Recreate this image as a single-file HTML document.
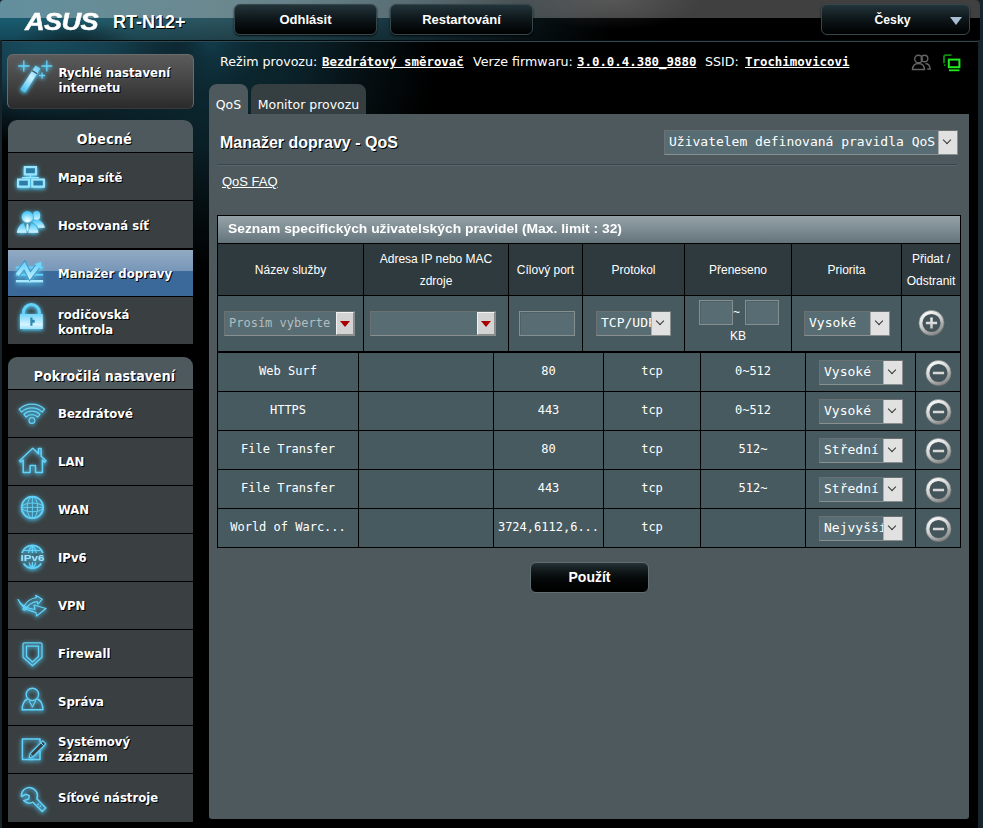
<!DOCTYPE html>
<html lang="cs">
<head>
<meta charset="utf-8">
<title>ASUS Wireless Router RT-N12+ - Manažer dopravy - QoS</title>
<style>
html,body{margin:0;padding:0;}
body{width:983px;height:828px;position:relative;overflow:hidden;background:#17242b;font-family:"Liberation Sans",sans-serif;color:#fff;}
.abs{position:absolute;}
#wrap{position:absolute;left:2px;top:0;width:976px;height:828px;background:#000;border-radius:0 5px 0 0;}
#bg1{position:absolute;left:0;top:0;width:976px;height:420px;
 background:
  radial-gradient(ellipse 180px 105px at 40px 40px, rgba(24,78,96,1) 0%, rgba(21,64,79,.95) 40%, rgba(12,36,45,.6) 75%, rgba(0,0,0,0) 100%),
  radial-gradient(ellipse 230px 230px at 205px 40px, rgba(19,66,82,1) 0%, rgba(15,50,62,1) 9%, rgba(12,40,49,.97) 22%, rgba(11,34,42,.92) 45%, rgba(7,22,27,.7) 70%, rgba(0,0,0,0) 100%);}
#hdr{position:absolute;left:-2px;top:0;width:980px;height:40px;border-radius:4px 5px 0 0;
 background:linear-gradient(90deg,rgba(255,255,255,.32) 0px,rgba(255,255,255,.30) 300px,rgba(255,255,255,.25) 600px) 0 0/100% 18px no-repeat,
  radial-gradient(ellipse 90px 30px at 612px 0px,rgba(255,255,255,.12),rgba(255,255,255,0)),
  radial-gradient(ellipse 60px 22px at 75px 42px,rgba(0,0,0,.45),rgba(0,0,0,0)),
  linear-gradient(180deg,rgba(0,0,0,0) 0px,rgba(0,0,0,0) 20px,rgba(0,0,0,.22) 40px),
  linear-gradient(90deg,#185a70 0px,#235866 120px,#2a535e 220px,#234a55 300px,#15303a 420px,#081418 520px,#000 610px);}
#hline{position:absolute;left:0;top:40px;width:976px;height:1px;background:#04090b;}
#hline2{position:absolute;left:0;top:41px;width:976px;height:1px;background:linear-gradient(90deg,#2d4a55 0,#2d4a55 400px,#39464b 976px);}
/* top buttons */
.tbtn{position:absolute;top:4px;height:31px;border:1px solid #36474c;border-radius:6px;box-sizing:border-box;
 background:linear-gradient(180deg,#22343a 0%,#0d1619 50%,#000 100%);font:bold 13px "Liberation Sans",sans-serif;color:#fff;text-align:center;line-height:30px;box-shadow:0 1px 2px rgba(0,0,0,.8);}
/* sidebar */
.sbtxt{font-family:"DejaVu Sans Condensed","DejaVu Sans",sans-serif;font-weight:bold;font-size:13px;color:#fff;text-shadow:1px 1px 0 #000;line-height:15px;}
#qis{position:absolute;left:5px;top:54px;width:187px;height:55px;border-radius:6px;box-sizing:border-box;border:1px solid #6b6b6b;border-bottom-color:#3a3a3a;
 background:linear-gradient(180deg,#5b5b5b 0%,#474747 45%,#2b2b2b 100%);}
.panel{position:absolute;left:6px;width:185px;background:#000;border-radius:9px 9px 0 0;overflow:hidden;}
.ptitle{height:32px;background:#4d595d;text-align:center;padding-left:8px;letter-spacing:.35px;box-sizing:border-box;font-family:"DejaVu Sans Condensed","DejaVu Sans",sans-serif;font-weight:bold;font-size:14px;line-height:38px;text-shadow:1px 1px 0 #000;margin-bottom:1px;}
.mi{height:47px;background:#3a4042;margin-bottom:1px;position:relative;}
.mi.on{border-top:1px solid #000;height:46px;background:linear-gradient(180deg,#91aac3 0px,#7897b8 20.500px,#3b6a9a 21.500px,#3a6999 46px);}
.mi.on svg{top:0;}
.mi.on span{top:16px;}
.mi span{position:absolute;left:50px;top:17px;white-space:nowrap;}
.mi span.two{top:10px;}
.p2 .mi span{top:16px;}
.p2 .mi span.two{top:8px;}
.mi svg{position:absolute;left:0;top:0;width:50px;height:47px;overflow:visible;}
/* content */
#status{position:absolute;left:218px;top:54px;font-family:"DejaVu Sans",sans-serif;font-size:12.65px;white-space:nowrap;line-height:16px;}
#status span{position:absolute;top:0;}
#status b{position:absolute;top:0;font-family:"DejaVu Sans Mono",monospace;font-weight:bold;font-size:12.4px;text-decoration:underline;}
.tab{position:absolute;top:84px;height:30px;border-radius:8px 8px 0 0;font-family:"DejaVu Sans",sans-serif;font-size:12.5px;line-height:42px;text-align:center;white-space:nowrap;}
#main{position:absolute;left:207px;top:114px;width:760px;height:705px;background:#4d595d;border-radius:0 0 3px 3px;}
#ttl{position:absolute;left:11px;top:20px;font:bold 16px "Liberation Sans",sans-serif;text-shadow:1px 1px 0 #000;white-space:nowrap;}
.sel{position:absolute;box-sizing:border-box;background:#576d73;border:1px solid #8a8f90;border-top-color:#6b7173;border-left-color:#6b7173;font-family:"DejaVu Sans Mono",monospace;font-size:13px;color:#fff;overflow:hidden;white-space:nowrap;}
.sel i{position:absolute;right:0;top:0;bottom:0;width:18px;background:#e1e1e1;border-left:1px solid #adadad;}
.sel i:after{content:"";position:absolute;left:5px;top:6px;width:5px;height:5px;border-right:1.4px solid #333;border-bottom:1.4px solid #333;transform:rotate(45deg);}
.sel em{position:absolute;left:4px;top:0;font-style:normal;}
table{border-collapse:collapse;}
.mono{font-family:"DejaVu Sans Mono",monospace;font-size:12px;}

.th{position:absolute;background:#2f3a3e;display:flex;align-items:center;justify-content:center;text-align:center;font:12px "Liberation Sans",sans-serif;line-height:22px;color:#fff;}
.td{position:absolute;background:#475a5f;text-align:center;white-space:nowrap;overflow:hidden;color:#fff;}
.inp{position:absolute;box-sizing:border-box;background:#576d73;border:1px solid #858f90;box-shadow:inset 1px 1px 0 #4f6166;}
.sel u{position:absolute;right:0;top:0;bottom:0;width:18px;background:#d3d3d3;border-left:1px solid #f2f2f2;border-top:1px solid #f2f2f2;border-right:1px solid #8a8a8a;border-bottom:1px solid #8a8a8a;box-sizing:border-box;text-decoration:none;}
.sel u:after{content:"";position:absolute;left:3px;top:8px;width:0;height:0;border-left:5px solid transparent;border-right:5px solid transparent;border-top:6px solid #a00;}
</style>
</head>
<body>
<div id="wrap">
 <div id="bg1"></div>
 <div id="hdr"></div>
 <div id="hline"></div><div id="hline2"></div>

 <!-- logo -->
 <div class="abs" id="logo" style="left:23px;top:10.500px;width:76px;height:22px;font:italic bold 23px 'Liberation Sans',sans-serif;letter-spacing:-0.5px;line-height:22px;transform-origin:0 50%;transform:scaleX(1.180);white-space:nowrap;-webkit-text-stroke:0.5px #fff;">ASUS</div>
 <div class="abs" style="left:111px;top:11px;font:bold 18px 'Liberation Sans',sans-serif;line-height:22px;text-shadow:1px 1px 0 #000;white-space:nowrap;">RT-N12+</div>

 <div class="tbtn" style="left:232px;width:143px;">Odhlásit</div>
 <div class="tbtn" style="left:388px;width:143px;">Restartování</div>
 <div class="tbtn" style="left:819px;width:149px;"><span style="position:absolute;left:0;width:141px;font-size:12.200px;">Česky</span><span style="position:absolute;right:7px;top:12px;width:0;height:0;border-left:6px solid transparent;border-right:6px solid transparent;border-top:8px solid #a9bdd4;"></span></div>

 <!-- quick setup -->
 <div id="qis">
  <svg class="abs" style="left:0;top:0;overflow:visible;" width="50" height="53" viewBox="0 0 50 53">
   <g filter="url(#glow)">
   <g stroke="#62d2fa" stroke-width="1.300" fill="none">
    <path d="M15.800 5.500v11M10.200 11h11.300"/><path d="M38.800 5.500v11M33.400 11h10.800"/><path d="M34.100 17.500v6M31.100 20.500h6"/>
   </g>
   <path d="M27.559 10.434L32.441 13.566L17.041 37.566L12.159 34.434z" fill="url(#wand)"/>
   <path d="M24.211 15.652L29.092 18.784" stroke="#3a5a68" stroke-width="1.300"/>
   </g>
  </svg>
  <div class="sbtxt abs" style="left:50.500px;top:10px;">Rychlé nastavení<br>internetu</div>
 </div>

 <!-- sidebar panel 1 -->
 <div class="panel" style="top:120px;height:225px;">
  <div class="ptitle">Obecné</div>
  <div class="mi"><svg viewBox="0 0 50 47"><g filter="url(#glow)">
    <g fill="#2c7ea6" stroke="#9be4fd" stroke-width="2.200">
     <rect x="16.800" y="14.100" width="11.200" height="7.200"/>
     <rect x="10.100" y="26.600" width="10.800" height="7"/>
     <rect x="24.300" y="26.600" width="11.600" height="7"/>
    </g>
    <path d="M22.400 22v2.500M14 24.600h17" stroke="#9be4fd" stroke-width="1.200" fill="none"/>
   </g></svg><span class="sbtxt">Mapa sítě</span></div>
  <div class="mi"><svg viewBox="0 0 50 47"><g filter="url(#glow)">
    <g mask="url(#mh)"><ellipse cx="28.600" cy="14.400" rx="3.600" ry="4.300" fill="url(#ig3)"/>
    <path d="M24.600 20.300C27 18.700 30.500 18.500 32.600 20C35 21.800 36.400 24.500 36.900 26.800H30.300C29.300 24.300 27.400 22.300 24.600 21.300z" fill="url(#ig3)"/></g>
    <circle cx="19.400" cy="15.800" r="5.700" fill="url(#ighead)"/>
    <path d="M8.800 31.800C9.500 27 12 23.500 14.800 22.300L15.700 22.300L18.900 31.800z" fill="url(#ig3)"/>
    <path d="M30.500 31.800C29.800 27 26.500 23.500 24 22.300L23.200 22.300L20.200 31.800z" fill="url(#ig3)"/>
    <ellipse cx="19.500" cy="26.500" rx="1.100" ry="3.700" fill="#c5f0ff"/>
   </g></svg><span class="sbtxt">Hostovaná síť</span></div>
  <div class="mi on"><svg viewBox="0 0 50 47"><g filter="url(#glow2)">
    <path d="M7.800 17.600h27.300M7.800 24.700h27.300" stroke="#62d2fa" stroke-width="2" fill="none"/>
    <path d="M7.800 31.200h27.300" stroke="#a5e8fe" stroke-width="2.400" fill="none"/>
    <path d="M9.400 24.800L16.400 15.200L22 26.300L30.500 15.200" stroke="#2f7dbb" stroke-opacity=".8" stroke-width="5.600" fill="none" stroke-linejoin="miter" stroke-miterlimit="10"/>
    <path d="M9.400 24.800L16.400 15.200L22 26.300L30.500 15.200" stroke="url(#zz)" stroke-width="4" fill="none" stroke-linejoin="miter" stroke-miterlimit="10"/>
    <path d="M26.600 13.900L33.400 11.500L33 19.200z" fill="#6fd6fb"/>
   </g></svg><span class="sbtxt">Manažer dopravy</span></div>
  <div class="mi"><svg viewBox="0 0 50 47"><g filter="url(#glow)">
    <path d="M15.400 18v-2.500a8 8 0 0 1 16 0V18" stroke="#62d2fa" stroke-width="3" fill="none"/>
    <rect x="12" y="17" width="22.800" height="15" fill="url(#ig2)"/>
    <path d="M22.300 20.500h2.200v2.200h2.200v3h-2.200v3h-2.200z" fill="#2f88b3"/>
   </g></svg><span class="sbtxt two">rodičovská<br>kontrola</span></div>
 </div>

 <!-- sidebar panel 2 -->
 <div class="panel p2" style="top:357px;height:466px;">
  <div class="ptitle" style="letter-spacing:.1px">Pokročilá nastavení</div>
  <div class="mi"><svg viewBox="0 0 50 47"><g filter="url(#glow)" fill="none" stroke="#62d2fa" stroke-width="1.200" stroke-linejoin="round">
    <path d="M11.200 19.200a18.500 18.500 0 0 1 25.400 0l-2.400 2.900a14.800 14.800 0 0 0 -20.600 0z"/>
    <path d="M15.900 24.300a11.800 11.800 0 0 1 16 0l-2.200 2.700a8.300 8.300 0 0 0 -11.600 0z"/>
    <circle cx="23.900" cy="30.500" r="2.900"/>
   </g></svg><span class="sbtxt">Bezdrátové</span></div>
  <div class="mi"><svg viewBox="0 0 50 47"><g filter="url(#glow)" fill="none" stroke="#62d2fa" stroke-width="1.500" stroke-linejoin="round" stroke-linecap="round">
    <path d="M11.500 22.800L24.700 10.200l5.800 5.500v-5.300h2.600v7.800l4.900 4.600l-1.300 1.300l-2.300-2v12.300h-6.900v-6.800h-5.400v6.800h-6.900V22l-2.300 2z"/>
   </g></svg><span class="sbtxt">LAN</span></div>
  <div class="mi"><svg viewBox="0 0 50 47"><g filter="url(#glow)" fill="none" stroke="#62d2fa" stroke-width="1.300">
    <circle cx="24.400" cy="21.400" r="10.800" stroke-width="1.700"/>
    <ellipse cx="24.400" cy="21.400" rx="5.200" ry="10.800" stroke-width="1"/>
    <ellipse cx="24.400" cy="21.400" rx="10.800" ry="4.400" stroke-width="1"/>
    <path d="M24.400 10.600v21.600M13.600 21.400h21.600" stroke-width=".9"/>
   </g></svg><span class="sbtxt">WAN</span></div>
  <div class="mi"><svg viewBox="0 0 50 47"><g filter="url(#glow)" fill="none" stroke="#62d2fa" stroke-width="1.200">
    <path d="M14 19a10.900 10.900 0 0 1 20.800 0" stroke-width="1.900"/>
    <path d="M15.500 29.500a10.900 10.900 0 0 0 17.800 0" stroke-width="1.900"/>
    <path d="M24.400 12v7M24.400 28v6M20.500 19c.5-3 2-6 3.900-7c1.900 1 3.400 4 3.900 7M21 28.500c.6 2.500 2 4.500 3.400 5.500c1.400-1 2.800-3 3.400-5.500M16 16.500h16.800"/>
    <text x="24.400" y="27" text-anchor="middle" font-family="Liberation Sans, sans-serif" font-size="9.500" font-weight="bold" fill="#9be4fd" stroke="none" textLength="24" lengthAdjust="spacingAndGlyphs">IPv6</text>
   </g></svg><span class="sbtxt">IPv6</span></div>
  <div class="mi"><svg viewBox="0 0 50 47"><g filter="url(#glow)" fill="none" stroke="#62d2fa" stroke-width="1.200" stroke-linejoin="round">
    <path d="M15 27.500c2-7 7-11 13.500-12l-.8-2.200l6.500 4l-4.300 4.800l-.6-2.500c-5 .5-9.500 3-12.500 8.500z"/>
    <path d="M10 17.500c3 6 8 9 17 10l-1 -4.500l12 3.500l-9.500 7.500l-.5-3.500c-5-1.500-9-2.500-12-5c-2.500-2-4.500-4.500-6-8z"/>
   </g></svg><span class="sbtxt">VPN</span></div>
  <div class="mi"><svg viewBox="0 0 50 47"><g filter="url(#glow)" fill="none" stroke="#62d2fa" stroke-width="1.300" stroke-linejoin="round">
    <path d="M16.500 12.800h16a1.500 1.500 0 0 1 1.500 1.500v13l-9.500 8.500l-9.500-8.500v-13a1.500 1.500 0 0 1 1.500-1.500z"/>
    <path d="M18.500 16.200h12v10.300l-6 5.400l-6-5.400z"/>
   </g></svg><span class="sbtxt">Firewall</span></div>
  <div class="mi"><svg viewBox="0 0 50 47"><g filter="url(#glow)" fill="none" stroke="#62d2fa" stroke-width="1.400" stroke-linejoin="round">
    <circle cx="24.400" cy="16.400" r="6.200"/>
    <path d="M19.500 21c-3.500 1.500-5.300 5.500-5.400 10.800h20.800c-.1-5.300-1.900-9.300-5.400-10.800"/>
    <path d="M21 22.500l3.400 6.500l3.400-6.500" stroke-width="1.100"/>
   </g></svg><span class="sbtxt">Správa</span></div>
  <div class="mi"><svg viewBox="0 0 50 47"><g filter="url(#glow)" fill="none" stroke="#62d2fa" stroke-width="1.500" stroke-linejoin="round">
    <path d="M32 25v8.400H14.400V13h17.600v3"/>
    <path d="M34.800 14.800l3 3L25 30.600l-3.800 1.200l.9-4.100z" stroke-width="1.200" fill="#3a4042"/>
    <path d="M32.800 16.800l3 3M22.100 27.700l2.900 2.900" stroke-width="1"/>
   </g></svg><span class="sbtxt two">Systémový<br>záznam</span></div>
  <div class="mi" style="height:48px"><svg viewBox="0 0 50 47"><g filter="url(#glow)" fill="none" stroke="#62d2fa" stroke-width="1.500" stroke-linejoin="round">
    <path d="M13.500 22.500a8 8 0 1 1 15.300 2.200l9 9.300l-3.600 3.500l-9.200-9.300a8 8 0 0 1 -9.300-1.600l5-1.600l.5-3.400l-3.400-1.300z"/>
    <path d="M29.500 31l1.500-1.500M31.500 33l1.500-1.500" stroke-width="1.200"/>
   </g></svg><span class="sbtxt">Síťové nástroje</span></div>
 </div>

 <!-- status line -->
 <div id="status"><span style="left:0">Režim provozu:</span><b style="left:102px">Bezdrátový směrovač</b><span style="left:253px">Verze firmwaru:</span><b style="left:357px">3.0.0.4.380_9880</b><span style="left:485px">SSID:</span><b style="left:525px">Trochimovicovi</b></div>
 <svg class="abs" style="left:908px;top:52px;" width="24" height="22" viewBox="0 0 24 22" fill="none" stroke="#646464" stroke-width="1.400">
  <circle cx="14.500" cy="6.500" r="3.300"/><path d="M15.500 11.500c3 .3 4.500 2.500 4.700 5.500h-3"/>
  <circle cx="8.500" cy="7" r="3.800"/><path d="M2.500 17.500c.2-4 2.200-6 6-6s5.800 2 6 6z"/>
 </svg>
 <svg class="abs" style="left:939px;top:52px;" width="22" height="22" viewBox="0 0 22 22" fill="none">
  <path d="M10.500 3.200h-6a1.500 1.500 0 0 0 -1.500 1.500v6.500M3 13.200h1.500" stroke="#0f8f0f" stroke-width="1.800"/>
  <rect x="7.800" y="7.600" width="10.600" height="7.600" stroke="#1eea1e" stroke-width="2"/>
  <path d="M8 18.300h10.500" stroke="#1eea1e" stroke-width="1.800"/>
 </svg>

 <!-- tabs -->
 <div class="tab" style="left:207px;width:39px;background:#4d595d;">QoS</div>
 <div class="tab" style="left:249px;width:115px;background:#353e41;">Monitor provozu</div>

 <!-- main panel -->
 <div id="main">
  <div id="ttl">Manažer dopravy - QoS</div>
  <div class="sel" style="left:455px;top:16px;width:294px;height:25px;font-size:13px;line-height:22px;"><em>Uživatelem definovaná pravidla QoS</em><i></i></div>
  <div class="abs" style="left:8px;top:50px;width:740px;height:1px;background:#38454a;"></div>
  <div class="abs" style="left:8px;top:51px;width:740px;height:1px;background:#59676c;"></div>
  <div class="abs" style="left:13px;top:60px;font:13px 'Liberation Sans',sans-serif;text-decoration:underline;white-space:nowrap;">QoS FAQ</div>

  <!-- table 1 -->
  <div class="abs" style="left:8px;top:101px;width:744px;height:137px;background:#000;"></div>
  <div class="abs" style="left:9px;top:102px;width:742px;height:27px;background:linear-gradient(180deg,#95a3a8 0%,#7d8c92 50%,#64747b 100%);font:bold 13px 'Liberation Sans',sans-serif;line-height:26px;white-space:nowrap;"><span style="display:inline-block;margin-left:10px;transform-origin:0 50%;transform:scaleX(1.065);">Seznam specifických uživatelských pravidel (Max. limit : 32)</span></div>
  <div class="th" style="left:9px;top:130px;width:145px;height:51px;"><span>Název služby</span></div>
  <div class="th" style="left:155px;top:130px;width:144px;height:51px;"><span>Adresa IP nebo MAC<br>zdroje</span></div>
  <div class="th" style="left:300px;top:130px;width:73px;height:51px;"><span>Cílový port</span></div>
  <div class="th" style="left:374px;top:130px;width:101px;height:51px;"><span>Protokol</span></div>
  <div class="th" style="left:476px;top:130px;width:106px;height:51px;"><span>Přeneseno</span></div>
  <div class="th" style="left:583px;top:130px;width:109px;height:51px;"><span>Priorita</span></div>
  <div class="th" style="left:693px;top:130px;width:58px;height:51px;"><span>Přidat /<br>Odstranit</span></div>
  <div class="td" style="left:9px;top:182px;width:145px;height:55px;"></div>
  <div class="td" style="left:155px;top:182px;width:144px;height:55px;"></div>
  <div class="td" style="left:300px;top:182px;width:73px;height:55px;"></div>
  <div class="td" style="left:374px;top:182px;width:101px;height:55px;"></div>
  <div class="td" style="left:476px;top:182px;width:106px;height:55px;"></div>
  <div class="td" style="left:583px;top:182px;width:109px;height:55px;"></div>
  <div class="td" style="left:693px;top:182px;width:58px;height:55px;"></div>
  <div class="sel" style="left:15px;top:197px;width:131px;height:25px;line-height:22px;font-size:12px;color:#b4bdbf;"><em>Prosím vyberte</em><u></u></div>
  <div class="sel" style="left:161px;top:197px;width:126px;height:25px;"><u></u></div>
  <div class="inp" style="left:310px;top:197px;width:56px;height:25px;"></div>
  <div class="sel" style="left:387px;top:197px;width:75px;height:25px;line-height:22px;font-size:13px;"><em>TCP/UDP</em><i></i></div>
  <div class="inp" style="left:490px;top:186px;width:34px;height:25px;"></div>
  <div class="inp" style="left:536px;top:186px;width:34px;height:25px;"></div>
  <div class="abs" style="left:521.5px;top:191px;width:12px;text-align:center;font:12px 'Liberation Sans',sans-serif;">~</div>
  <div class="abs" style="left:513px;top:215px;width:32px;text-align:center;font:12px 'Liberation Sans',sans-serif;">KB</div>
  <div class="sel" style="left:595px;top:197px;width:86px;height:25px;line-height:22px;font-size:13px;"><em>Vysoké</em><i></i></div>
  <svg class="abs" style="left:708px;top:195px;" width="28" height="28" viewBox="0 0 28 28"><circle cx="14.500" cy="14" r="10.900" fill="#43555a" stroke="url(#ring)" stroke-width="3.600"/><circle cx="14.500" cy="14" r="12.600" fill="none" stroke="#5e6a6d" stroke-width=".6"/><path d="M14.500 8.400v11.200M8.900 14h11.200" stroke="url(#bar)" stroke-width="2.500"/></svg>
  <!-- table 2 -->
  <div class="abs" style="left:8px;top:237px;width:744px;height:197px;background:#000;"></div>
  <div class="td mono" style="left:9px;top:239px;width:140px;height:38px;line-height:37px;">Web Surf</div>
  <div class="td mono" style="left:150px;top:239px;width:134px;height:38px;line-height:37px;"></div>
  <div class="td mono" style="left:285px;top:239px;width:109px;height:38px;line-height:37px;">80</div>
  <div class="td mono" style="left:395px;top:239px;width:96px;height:38px;line-height:37px;">tcp</div>
  <div class="td mono" style="left:492px;top:239px;width:104px;height:38px;line-height:37px;">0~512</div>
  <div class="td mono" style="left:597px;top:239px;width:109px;height:38px;line-height:37px;"></div>
  <div class="td mono" style="left:707px;top:239px;width:44px;height:38px;line-height:37px;"></div>
  <div class="sel" style="left:610px;top:246px;width:84px;height:25px;line-height:22px;font-size:13px;"><em>Vysoké</em><i></i></div>
  <svg class="abs" style="left:715px;top:245px;" width="28" height="28" viewBox="0 0 28 28"><circle cx="14.500" cy="14" r="10.900" fill="#43555a" stroke="url(#ring)" stroke-width="3.600"/><circle cx="14.500" cy="14" r="12.600" fill="none" stroke="#5e6a6d" stroke-width=".6"/><path d="M8.900 14h11.200" stroke="#d8d8d8" stroke-width="2.500"/></svg>
  <div class="td mono" style="left:9px;top:278px;width:140px;height:38px;line-height:37px;">HTTPS</div>
  <div class="td mono" style="left:150px;top:278px;width:134px;height:38px;line-height:37px;"></div>
  <div class="td mono" style="left:285px;top:278px;width:109px;height:38px;line-height:37px;">443</div>
  <div class="td mono" style="left:395px;top:278px;width:96px;height:38px;line-height:37px;">tcp</div>
  <div class="td mono" style="left:492px;top:278px;width:104px;height:38px;line-height:37px;">0~512</div>
  <div class="td mono" style="left:597px;top:278px;width:109px;height:38px;line-height:37px;"></div>
  <div class="td mono" style="left:707px;top:278px;width:44px;height:38px;line-height:37px;"></div>
  <div class="sel" style="left:610px;top:285px;width:84px;height:25px;line-height:22px;font-size:13px;"><em>Vysoké</em><i></i></div>
  <svg class="abs" style="left:715px;top:284px;" width="28" height="28" viewBox="0 0 28 28"><circle cx="14.500" cy="14" r="10.900" fill="#43555a" stroke="url(#ring)" stroke-width="3.600"/><circle cx="14.500" cy="14" r="12.600" fill="none" stroke="#5e6a6d" stroke-width=".6"/><path d="M8.900 14h11.200" stroke="#d8d8d8" stroke-width="2.500"/></svg>
  <div class="td mono" style="left:9px;top:317px;width:140px;height:38px;line-height:37px;">File Transfer</div>
  <div class="td mono" style="left:150px;top:317px;width:134px;height:38px;line-height:37px;"></div>
  <div class="td mono" style="left:285px;top:317px;width:109px;height:38px;line-height:37px;">80</div>
  <div class="td mono" style="left:395px;top:317px;width:96px;height:38px;line-height:37px;">tcp</div>
  <div class="td mono" style="left:492px;top:317px;width:104px;height:38px;line-height:37px;">512~</div>
  <div class="td mono" style="left:597px;top:317px;width:109px;height:38px;line-height:37px;"></div>
  <div class="td mono" style="left:707px;top:317px;width:44px;height:38px;line-height:37px;"></div>
  <div class="sel" style="left:610px;top:324px;width:84px;height:25px;line-height:22px;font-size:13px;"><em>Střední</em><i></i></div>
  <svg class="abs" style="left:715px;top:323px;" width="28" height="28" viewBox="0 0 28 28"><circle cx="14.500" cy="14" r="10.900" fill="#43555a" stroke="url(#ring)" stroke-width="3.600"/><circle cx="14.500" cy="14" r="12.600" fill="none" stroke="#5e6a6d" stroke-width=".6"/><path d="M8.900 14h11.200" stroke="#d8d8d8" stroke-width="2.500"/></svg>
  <div class="td mono" style="left:9px;top:356px;width:140px;height:38px;line-height:37px;">File Transfer</div>
  <div class="td mono" style="left:150px;top:356px;width:134px;height:38px;line-height:37px;"></div>
  <div class="td mono" style="left:285px;top:356px;width:109px;height:38px;line-height:37px;">443</div>
  <div class="td mono" style="left:395px;top:356px;width:96px;height:38px;line-height:37px;">tcp</div>
  <div class="td mono" style="left:492px;top:356px;width:104px;height:38px;line-height:37px;">512~</div>
  <div class="td mono" style="left:597px;top:356px;width:109px;height:38px;line-height:37px;"></div>
  <div class="td mono" style="left:707px;top:356px;width:44px;height:38px;line-height:37px;"></div>
  <div class="sel" style="left:610px;top:363px;width:84px;height:25px;line-height:22px;font-size:13px;"><em>Střední</em><i></i></div>
  <svg class="abs" style="left:715px;top:362px;" width="28" height="28" viewBox="0 0 28 28"><circle cx="14.500" cy="14" r="10.900" fill="#43555a" stroke="url(#ring)" stroke-width="3.600"/><circle cx="14.500" cy="14" r="12.600" fill="none" stroke="#5e6a6d" stroke-width=".6"/><path d="M8.900 14h11.200" stroke="#d8d8d8" stroke-width="2.500"/></svg>
  <div class="td mono" style="left:9px;top:395px;width:140px;height:38px;line-height:37px;">World of Warc...</div>
  <div class="td mono" style="left:150px;top:395px;width:134px;height:38px;line-height:37px;"></div>
  <div class="td mono" style="left:285px;top:395px;width:109px;height:38px;line-height:37px;">3724,6112,6...</div>
  <div class="td mono" style="left:395px;top:395px;width:96px;height:38px;line-height:37px;">tcp</div>
  <div class="td mono" style="left:492px;top:395px;width:104px;height:38px;line-height:37px;"></div>
  <div class="td mono" style="left:597px;top:395px;width:109px;height:38px;line-height:37px;"></div>
  <div class="td mono" style="left:707px;top:395px;width:44px;height:38px;line-height:37px;"></div>
  <div class="sel" style="left:610px;top:402px;width:84px;height:25px;line-height:22px;font-size:13px;"><em>Nejvyšší</em><i></i></div>
  <svg class="abs" style="left:715px;top:401px;" width="28" height="28" viewBox="0 0 28 28"><circle cx="14.500" cy="14" r="10.900" fill="#43555a" stroke="url(#ring)" stroke-width="3.600"/><circle cx="14.500" cy="14" r="12.600" fill="none" stroke="#5e6a6d" stroke-width=".6"/><path d="M8.900 14h11.200" stroke="#d8d8d8" stroke-width="2.500"/></svg>

  <div class="abs" id="apply" style="left:321px;top:448px;width:119px;height:31px;border-radius:6px;box-sizing:border-box;border:1px solid #606d71;background:linear-gradient(180deg,#26333700 0%,#000 100%),linear-gradient(180deg,#263337 0%,#0c1315 55%,#000 100%);font:bold 14px 'Liberation Sans',sans-serif;text-align:center;line-height:29px;">Použít</div>
 </div>
</div>

<svg width="0" height="0" style="position:absolute">
 <defs>
  <filter id="glow" x="-40%" y="-40%" width="180%" height="180%">
   <feGaussianBlur in="SourceGraphic" stdDeviation="1.900" result="b0"/><feOffset in="b0" dy="1.200" result="b"/>
   <feColorMatrix in="b" type="matrix" values="0 0 0 0 0.070  0 0 0 0 0.520  0 0 0 0 0.800  0 0 0 1.400 0" result="g"/>
   <feMerge><feMergeNode in="g"/><feMergeNode in="SourceGraphic"/></feMerge>
  </filter>
  <filter id="glow2" x="-40%" y="-40%" width="180%" height="180%">
   <feGaussianBlur in="SourceGraphic" stdDeviation="2" result="b0"/><feOffset in="b0" dy="1.500" result="b"/>
   <feColorMatrix in="b" type="matrix" values="0 0 0 0 0.100  0 0 0 0 0.620  0 0 0 0 0.900  0 0 0 0.900 0" result="g"/>
   <feMerge><feMergeNode in="g"/><feMergeNode in="SourceGraphic"/></feMerge>
  </filter>
  <linearGradient id="wand" x1="0.900" y1="0" x2="0.100" y2="1"><stop offset="0" stop-color="#62ccf7"/><stop offset="0.450" stop-color="#c9f1ff"/><stop offset="1" stop-color="#3dbbf0"/></linearGradient>
  <linearGradient id="ig" x1="0" y1="0" x2="0" y2="1"><stop offset="0" stop-color="#5fcdf8"/><stop offset="0.600" stop-color="#c9f1ff"/><stop offset="1" stop-color="#58c8f5"/></linearGradient>
  <linearGradient id="ig2" x1="0" y1="0" x2="0" y2="1"><stop offset="0" stop-color="#6fd4fa"/><stop offset="0.700" stop-color="#d5f4ff"/><stop offset="1" stop-color="#9fe3fc"/></linearGradient>
  <linearGradient id="ring" x1="0.200" y1="0" x2="0.700" y2="1"><stop offset="0" stop-color="#fafafa"/><stop offset="0.450" stop-color="#d2d2d2"/><stop offset="1" stop-color="#8a8a8a"/></linearGradient>
  <linearGradient id="bar" gradientUnits="userSpaceOnUse" x1="0" y1="8" x2="0" y2="20"><stop offset="0" stop-color="#f0f0f0"/><stop offset="1" stop-color="#c4c4c4"/></linearGradient>
  <linearGradient id="zz" gradientUnits="userSpaceOnUse" x1="0" y1="11" x2="0" y2="31"><stop offset="0" stop-color="#5fd0fb"/><stop offset="1" stop-color="#cdf3ff"/></linearGradient>
  <mask id="mh" maskUnits="userSpaceOnUse" x="0" y="0" width="50" height="47"><rect x="0" y="0" width="50" height="47" fill="#fff"/><circle cx="19.400" cy="15.800" r="6.700" fill="#000"/></mask>
  <linearGradient id="ig3" x1="0" y1="0" x2="0" y2="1"><stop offset="0" stop-color="#48c8fa"/><stop offset="1" stop-color="#d2f4ff"/></linearGradient>
  <radialGradient id="ighead" cx="0.500" cy="0.850" r="0.800"><stop offset="0" stop-color="#ffffff"/><stop offset="0.450" stop-color="#a8e8ff"/><stop offset="1" stop-color="#3fc4f9"/></radialGradient>
 </defs>
</svg>
</body>
</html>
